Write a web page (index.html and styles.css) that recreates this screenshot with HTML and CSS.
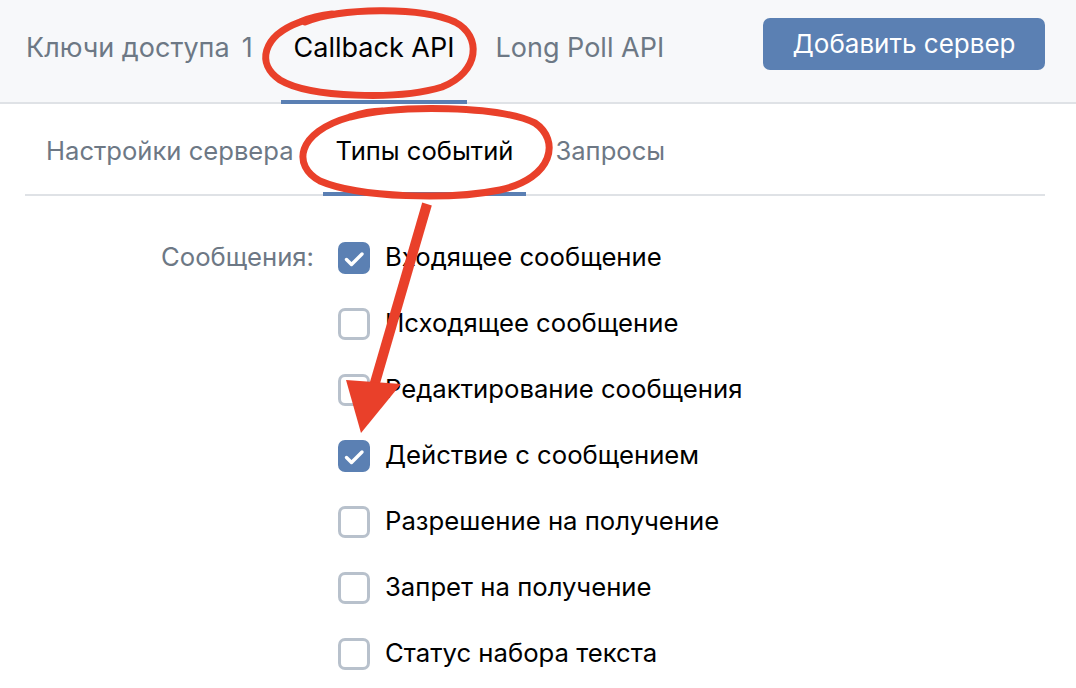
FILE: index.html
```html
<!DOCTYPE html>
<html lang="ru">
<head>
<meta charset="utf-8">
<title>Callback API</title>
<link rel="stylesheet" href="styles.css">
</head>
<body>
<div class="page">
  <header class="topbar">
    <nav class="tabs">
      <a class="tab">Ключи доступа<span class="tab-count">1</span></a>
      <a class="tab tab-active">Callback API</a>
      <a class="tab">Long Poll API</a>
    </nav>
    <button class="btn-primary" type="button">Добавить сервер</button>
  </header>

  <main class="content">
    <nav class="subtabs">
      <a class="subtab">Настройки сервера</a>
      <a class="subtab subtab-active">Типы событий</a>
      <a class="subtab">Запросы</a>
    </nav>

    <section class="form">
      <div class="form-label">Сообщения:</div>
      <ul class="checklist">
        <li class="check-row"><span class="box box-on"><svg viewBox="0 0 32 32" width="32" height="32"><path d="M8.5 17.5 L13.5 22.5 L24 12" fill="none" stroke="#fff" stroke-width="3.4" stroke-linecap="round" stroke-linejoin="round"/></svg></span><span class="check-text">Входящее сообщение</span></li>
        <li class="check-row"><span class="box"></span><span class="check-text">Исходящее сообщение</span></li>
        <li class="check-row"><span class="box"></span><span class="check-text">Редактирование сообщения</span></li>
        <li class="check-row"><span class="box box-on"><svg viewBox="0 0 32 32" width="32" height="32"><path d="M8.5 17.5 L13.5 22.5 L24 12" fill="none" stroke="#fff" stroke-width="3.4" stroke-linecap="round" stroke-linejoin="round"/></svg></span><span class="check-text">Действие с сообщением</span></li>
        <li class="check-row"><span class="box"></span><span class="check-text">Разрешение на получение</span></li>
        <li class="check-row"><span class="box"></span><span class="check-text">Запрет на получение</span></li>
        <li class="check-row"><span class="box"></span><span class="check-text">Статус набора текста</span></li>
      </ul>
    </section>
  </main>

  <svg class="annotations" width="1076" height="688" viewBox="0 0 1076 688">
    <g fill="none" stroke="#e9402a" stroke-width="7" stroke-linecap="round">
      <path d="M305 22 C 340 8, 420 6, 455 22 C 482 36, 480 72, 442 87 C 400 100, 310 98, 280 80 C 256 64, 262 36, 300 22 C 312 17, 322 15, 332 14"/>
      <path d="M350 117 C 400 104, 500 106, 535 123 C 560 140, 554 178, 500 190 C 450 200, 360 198, 320 181 C 292 166, 296 132, 350 117 C 362 113, 372 111, 382 111"/>
    </g>
    <line x1="427" y1="204" x2="372" y2="393" stroke="#e9402a" stroke-width="10"/>
    <polygon points="346,380 401,384 361,433" fill="#e9402a"/>
  </svg>
</div>
</body>
</html>
```

FILE: styles.css
```css
* { box-sizing: border-box; }

html, body {
  margin: 0;
  padding: 0;
  background: #ffffff;
}

body {
  font-family: Inter, "Noto Sans", "Liberation Sans", sans-serif;
  font-size: 25.7px;
  color: #000;
  -webkit-font-smoothing: antialiased;
}

.page {
  position: relative;
  width: 1076px;
  height: 688px;
  overflow: hidden;
}

.topbar {
  height: 104px;
  background: #f7f8fa;
  box-shadow: inset 0 -2px 0 #dfe2e6;
  display: flex;
  align-items: stretch;
  justify-content: space-between;
  padding: 0 31px 0 13px;
}

.tabs {
  display: flex;
  gap: 16px;
}

.tab {
  display: flex;
  align-items: center;
  padding: 0 12px 6px 13px;
  font-size: 27px;
  color: #6d7885;
  border-bottom: 4px solid transparent;
  white-space: nowrap;
}

.tab-count {
  margin-left: 12px;
}

.tab-active {
  color: #000;
  border-bottom-color: #5a7fb3;
}

.btn-primary {
  align-self: flex-start;
  margin-top: 18px;
  height: 52px;
  width: 282px;
  border: 0;
  border-radius: 7px;
  background: #5b80b3;
  color: #fff;
  font: inherit;
  font-size: 26px;
  padding: 0 0 2px;
}

.content {
  padding: 0 31px 0 25px;
}

.subtabs {
  display: flex;
  gap: 16px;
  height: 92px;
  padding-left: 8px;
  box-shadow: inset 0 -2px 0 #dfe2e6;
}

.subtab {
  display: flex;
  align-items: center;
  padding: 4px 13px 0;
  font-size: 25.6px;
  color: #6d7885;
  border-bottom: 4px solid transparent;
  white-space: nowrap;
}

.subtab-active {
  color: #000;
  border-bottom-color: #5a7fb3;
}

.form {
  display: grid;
  grid-template-columns: 289px 1fr;
  column-gap: 24px;
  padding-top: 46px;
}

.form-label {
  text-align: right;
  color: #6d7885;
  height: 32px;
  line-height: 30px;
}

.checklist {
  list-style: none;
  margin: 0;
  padding: 0;
  display: flex;
  flex-direction: column;
  gap: 34px;
}

.check-row {
  display: flex;
  align-items: center;
  gap: 15px;
  height: 32px;
  white-space: nowrap;
}

.check-text {
  padding-bottom: 3px;
}

.box {
  width: 32px;
  height: 32px;
  flex: none;
  border: 3px solid #b8c1cc;
  border-radius: 7px;
  background: #fff;
  position: relative;
}

.box-on {
  background: #5b80b3;
  border-color: #5b80b3;
}

.box-on svg {
  position: absolute;
  left: -3px;
  top: -3px;
}

.annotations {
  position: absolute;
  left: 0;
  top: 0;
  pointer-events: none;
}
```
